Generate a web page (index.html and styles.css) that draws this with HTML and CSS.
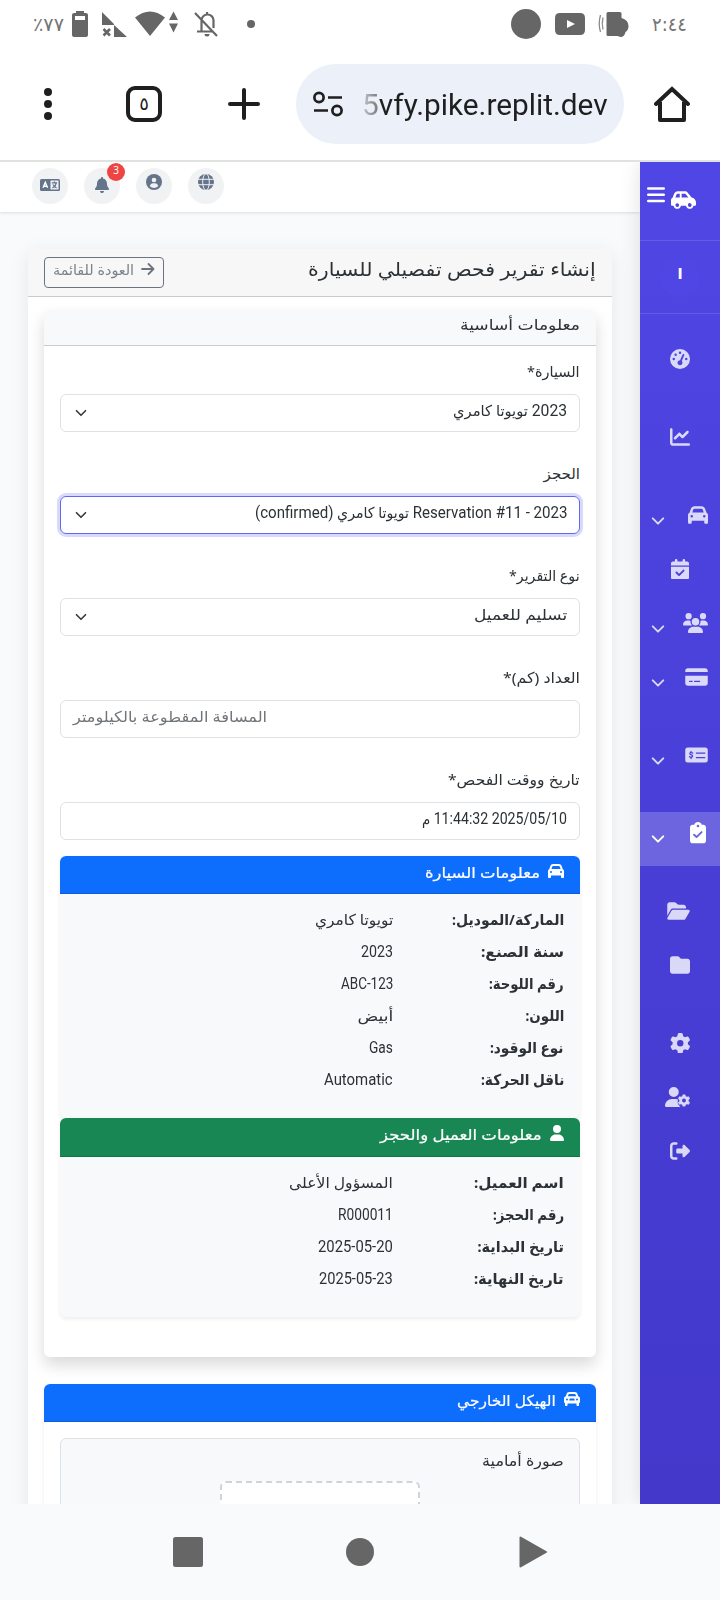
FILE: index.html
```html
<!DOCTYPE html>
<html lang="ar" dir="rtl">
<head>
<meta charset="utf-8">
<title>إنشاء تقرير فحص تفصيلي للسيارة</title>
<link rel="stylesheet" href="styles.css">
</head>
<body>
<svg class="defs" width="0" height="0">
  <symbol id="car" viewBox="0 0 512 512"><path d="M135.2 117.4L109.1 192H402.9l-26.1-74.6C372.3 104.6 360.2 96 346.6 96H165.4c-13.6 0-25.7 8.6-30.2 21.4zM39.6 196.8L74.8 96.3C88.3 57.8 124.6 32 165.4 32H346.6c40.8 0 77.1 25.8 90.6 64.3l35.2 100.5c23.2 9.6 39.6 32.5 39.6 59.2V400v48c0 17.7-14.3 32-32 32H448c-17.7 0-32-14.3-32-32V400H96v48c0 17.7-14.3 32-32 32H32c-17.7 0-32-14.3-32-32V400 256c0-26.7 16.4-49.6 39.6-59.2zM128 288a32 32 0 1 0 -64 0 32 32 0 1 0 64 0zm288 32a32 32 0 1 0 0-64 32 32 0 1 0 0 64z"/></symbol>
  <symbol id="user" viewBox="0 0 448 512"><path d="M224 256A128 128 0 1 0 224 0a128 128 0 1 0 0 256zm-45.7 48C79.8 304 0 383.8 0 482.3C0 498.7 13.3 512 29.7 512H418.3c16.4 0 29.7-13.3 29.7-29.7C448 383.8 368.2 304 269.7 304H178.3z"/></symbol>
  <symbol id="gear" viewBox="0 0 512 512"><path d="M495.9 166.6c3.2 8.7 .5 18.4-6.4 24.6l-43.3 39.4c1.1 8.3 1.7 16.8 1.7 25.4s-.6 17.1-1.7 25.4l43.3 39.4c6.9 6.2 9.6 15.9 6.4 24.6c-4.4 11.9-9.7 23.3-15.8 34.3l-4.7 8.1c-6.6 11-14 21.4-22.1 31.2c-5.9 7.2-15.7 9.6-24.5 6.8l-55.7-17.7c-13.4 10.3-28.2 18.9-44 25.4l-12.5 57.1c-2 9.1-9 16.3-18.2 17.8c-13.8 2.3-28 3.5-42.5 3.5s-28.7-1.2-42.5-3.5c-9.2-1.5-16.2-8.7-18.2-17.8l-12.5-57.1c-15.8-6.5-30.6-15.1-44-25.4L83.1 425.9c-8.8 2.8-18.6 .3-24.5-6.8c-8.1-9.8-15.5-20.2-22.1-31.2l-4.7-8.1c-6.1-11-11.4-22.4-15.8-34.3c-3.2-8.7-.5-18.4 6.4-24.6l43.3-39.4C64.6 273.1 64 264.6 64 256s.6-17.1 1.7-25.4L22.4 191.2c-6.9-6.2-9.6-15.9-6.4-24.6c4.4-11.9 9.7-23.3 15.8-34.3l4.7-8.1c6.6-11 14-21.4 22.1-31.2c5.9-7.2 15.7-9.6 24.5-6.8l55.7 17.7c13.4-10.3 28.2-18.9 44-25.4l12.5-57.1c2-9.1 9-16.3 18.2-17.8C227.3 1.2 241.5 0 256 0s28.7 1.2 42.5 3.5c9.2 1.5 16.2 8.7 18.2 17.8l12.5 57.1c15.8 6.5 30.6 15.1 44 25.4l55.7-17.7c8.8-2.8 18.6-.3 24.5 6.8c8.1 9.8 15.5 20.2 22.1 31.2l4.7 8.1c6.1 11 11.4 22.4 15.8 34.3zM256 336a80 80 0 1 0 0-160 80 80 0 1 0 0 160z"/></symbol>
  <symbol id="down" viewBox="0 0 16 16"><path d="m2 5 6 6 6-6" fill="none" stroke="currentColor" stroke-width="2.2" stroke-linecap="round" stroke-linejoin="round"/></symbol>
</svg>

<svg class="status" width="720" height="48" viewBox="0 0 720 48" direction="ltr">
  <text class="sys" x="33" y="31" textLength="31" lengthAdjust="spacingAndGlyphs">٪٧٧</text>
  <path fill-rule="evenodd" d="M76 11h8v2h2q2 0 2 2v20q0 2-2 2H74q-2 0-2-2V15q0-2 2-2h2zM75 16v4h10v-4z"/>
  <path d="M102 12l12 12v1h-12zM114 25l13 12h-13z"/>
  <path d="M103.500 29l6.500 6.500M110 29l-6.500 6.500" stroke="#666" stroke-width="2.600"/>
  <path d="M135 17.500Q150 5.500 165 17.500L150 36zM169 20l4.500-8.500 4.500 8.500zM169 23.500h9l-4.500 9z"/>
  <path class="line" d="M201.500 31V21a6 6 0 0 1 12-1v8M197 31.500h16M195 13l22 23M207 12v3" stroke="#666" stroke-width="2.200"/>
  <path d="M204.500 34h5a2.500 2.500 0 0 1-5 0z"/>
  <circle cx="251" cy="24" r="4"/>
  <circle cx="526" cy="24" r="15"/>
  <path fill-rule="evenodd" d="M560 13h20q5 0 5 5v12q0 5-5 5h-20q-5 0-5-5V18q0-5 5-5zm7 7v8l8-4z"/>
  <path d="M608 12h12q1.500 0 1.500 1.500V18q7 2 7 8 0 4-3 6-1 5-5 5l-3-1h-9.500q-1.500 0-1.500-1.500v-21q0-1.500 1.500-1.500z"/>
  <path class="line" d="M600.500 15q-2.500 9 0 17M603 17.500q-1.500 6 0 12" stroke="#8a8a8a" stroke-width="1.300"/>
  <text class="sys" x="652" y="31" textLength="35" lengthAdjust="spacingAndGlyphs">٢:٤٤</text>
</svg>

<header class="browser" dir="ltr">
  <svg class="b-dots" width="12" height="36" viewBox="0 0 12 36"><circle cx="6" cy="6" r="4"/><circle cx="6" cy="18" r="4"/><circle cx="6" cy="30" r="4"/></svg>
  <div class="b-tabs">٥</div>
  <svg class="b-plus" width="32" height="32" viewBox="0 0 32 32"><path d="M16 2v28M2 16h28" stroke="#1f1f1f" stroke-width="4" stroke-linecap="round"/></svg>
  <div class="b-url">
    <svg class="line" width="30" height="26" viewBox="0 0 30 26" stroke="#1f1f1f" stroke-width="2.700"><circle cx="6" cy="6.500" r="4.600"/><path d="M15 6.500h14M1 19.500h14"/><circle cx="24" cy="19.500" r="4.600"/></svg>
    <span data-w="246"><i>5</i>vfy.pike.replit.dev</span>
  </div>
  <svg class="b-home line" width="36" height="36" viewBox="0 0 36 36" stroke="#1f1f1f" stroke-width="4" stroke-linejoin="round"><path d="M2 18 18 3l16 15" stroke-linecap="round" stroke-linejoin="miter"/><path d="M6 16v18h24V16"/></svg>
</header>

<div class="page">
  <nav class="sidebar">
    <div class="brand">
      <svg class="brand-car" width="25" height="20" viewBox="0 0 640 512"><path d="M171.300 96H224v96H111.300l30.400-75.900C146.500 104 158.200 96 171.300 96zM272 192V96h81.200c9.700 0 18.900 4.400 25 12l67.200 84H272zm256.200 1L428.200 68c-18.200-22.800-45.800-36-75-36H171.300c-39.300 0-74.600 23.900-89.100 60.300L40.600 196.400C16.800 205.800 0 228.900 0 256V368c0 17.700 14.300 32 32 32H65.300c7.600 45.400 47.100 80 94.700 80s87.100-34.600 94.700-80H385.300c7.600 45.400 47.100 80 94.700 80s87.100-34.600 94.700-80H608c17.700 0 32-14.300 32-32V320c0-65.200-48.800-119-111.800-127zM434.700 368a48 48 0 1 1 90.500 32 48 48 0 1 1 -90.500-32zM160 336a48 48 0 1 1 0 96 48 48 0 1 1 0-96z"/></svg>
      <svg width="18" height="16" viewBox="0 0 18 16"><path d="M1.200 1.500h15.600M1.200 7.800h15.600M1.200 14h15.600" stroke="#fff" stroke-width="2.400" stroke-linecap="round"/></svg>
    </div>
    <div class="avatar-row"><div class="avatar">ا</div></div>
    <div class="menu">
      <a class="item"><span class="ico"><svg width="20" height="20" viewBox="0 0 512 512"><path d="M0 256a256 256 0 1 1 512 0A256 256 0 1 1 0 256zM288 96a32 32 0 1 0 -64 0 32 32 0 1 0 64 0zM256 416c35.300 0 64-28.700 64-64c0-17.400-6.900-33.100-18.100-44.600L366 161.700c5.300-12.100-.2-26.300-12.300-31.600s-26.300 .2-31.600 12.300L257.900 288c-.6 0-1.300 0-1.900 0c-35.300 0-64 28.700-64 64s28.700 64 64 64zM176 144a32 32 0 1 0 -64 0 32 32 0 1 0 64 0zM96 288a32 32 0 1 0 0-64 32 32 0 1 0 0 64zm352-32a32 32 0 1 0 -64 0 32 32 0 1 0 64 0z"/></svg></span></a>
      <a class="item gap"><span class="ico"><svg width="20" height="20" viewBox="0 0 512 512"><path d="M64 64c0-17.700-14.300-32-32-32S0 46.300 0 64V400c0 44.200 35.800 80 80 80H480c17.700 0 32-14.300 32-32s-14.300-32-32-32H80c-8.800 0-16-7.200-16-16V64zm406.600 86.600c12.500-12.500 12.500-32.800 0-45.300s-32.800-12.500-45.300 0L320 210.700l-57.400-57.400c-12.500-12.500-32.800-12.500-45.300 0l-112 112c-12.500 12.500-12.500 32.800 0 45.300s32.800 12.500 45.300 0L240 221.300l57.400 57.400c12.500 12.500 32.800 12.500 45.300 0l128-128z"/></svg></span></a>
      <a class="item drop gap"><span class="ico"><svg width="20" height="20"><use href="#car"/></svg></span><svg class="chev" width="14" height="14"><use href="#down"/></svg></a>
      <a class="item"><span class="ico"><svg width="18" height="20.600" viewBox="0 0 448 512"><path d="M128 0c17.700 0 32 14.300 32 32V64H288V32c0-17.700 14.300-32 32-32s32 14.300 32 32V64h48c26.500 0 48 21.500 48 48v48H0V112C0 85.500 21.500 64 48 64H96V32c0-17.700 14.300-32 32-32zM0 192H448V464c0 26.500-21.500 48-48 48H48c-26.500 0-48-21.500-48-48V192zM329 305c9.400-9.400 9.400-24.600 0-33.900s-24.600-9.400-33.900 0l-95 95-47-47c-9.400-9.400-24.600-9.400-33.900 0s-9.400 24.600 0 33.900l64 64c9.400 9.400 24.600 9.400 33.900 0L329 305z"/></svg></span></a>
      <a class="item drop"><span class="ico"><svg width="25" height="20" viewBox="0 0 640 512"><path d="M144 0a80 80 0 1 1 0 160A80 80 0 1 1 144 0zM512 0a80 80 0 1 1 0 160A80 80 0 1 1 512 0zM0 298.700C0 239.800 47.800 192 106.700 192h42.700c15.900 0 31 3.500 44.600 9.700c-1.300 7.200-1.900 14.700-1.900 22.300c0 38.200 16.800 72.500 43.300 96c-.2 0-.4 0-.7 0H21.300C9.600 320 0 310.400 0 298.700zM405.300 320c-.2 0-.4 0-.7 0c26.600-23.500 43.300-57.800 43.300-96c0-7.600-.7-15-1.900-22.300c13.600-6.300 28.700-9.700 44.600-9.700h42.700C592.200 192 640 239.800 640 298.700c0 11.800-9.600 21.300-21.300 21.300H405.300zM224 224a96 96 0 1 1 192 0 96 96 0 1 1 -192 0zM128 485.300C128 411.700 187.700 352 261.300 352H378.700C452.300 352 512 411.700 512 485.300c0 14.700-11.900 26.700-26.700 26.700H154.700c-14.700 0-26.700-11.900-26.700-26.700z"/></svg></span><svg class="chev" width="14" height="14"><use href="#down"/></svg></a>
      <a class="item drop"><span class="ico"><svg width="23" height="20" viewBox="0 0 576 512"><path d="M64 32C28.700 32 0 60.700 0 96v32H576V96c0-35.300-28.700-64-64-64H64zM576 224H0V416c0 35.300 28.700 64 64 64H512c35.300 0 64-28.700 64-64V224zM112 352h64c8.800 0 16 7.200 16 16s-7.200 16-16 16H112c-8.800 0-16-7.200-16-16s7.200-16 16-16zm112 16c0-8.800 7.200-16 16-16H368c8.800 0 16 7.200 16 16s-7.200 16-16 16H240c-8.800 0-16-7.200-16-16z"/></svg></span><svg class="chev" width="14" height="14"><use href="#down"/></svg></a>
      <a class="item drop gap"><span class="ico"><svg width="23" height="20" viewBox="0 0 576 512"><path fill-rule="evenodd" d="M64 64H512a64 64 0 0 1 64 64V384a64 64 0 0 1-64 64H64a64 64 0 0 1-64-64V128A64 64 0 0 1 64 64zM272 192v32H512v-32zM272 304v32H512v-32z"/><path class="line" d="M190 206c-14-12-36-16-54-10-24 8-24 38 0 48l34 14c24 12 22 44-4 52-20 6-42 0-58-12M148 164v28M148 316v32" stroke="#4a41da" stroke-width="32" stroke-linecap="round"/></svg></span><svg class="chev" width="14" height="14"><use href="#down"/></svg></a>
      <a class="item drop active gap"><span class="ico"><svg width="16" height="21.300" viewBox="0 0 384 512"><path fill-rule="evenodd" d="M192 0c-41.800 0-77.400 26.700-90.500 64H64C28.700 64 0 92.700 0 128V448c0 35.300 28.700 64 64 64H320c35.300 0 64-28.700 64-64V128c0-35.300-28.700-64-64-64H282.500C269.400 26.700 233.800 0 192 0zm0 64a32 32 0 1 1 0 64 32 32 0 1 1 0-64z"/><path class="line" d="M98 306l60 56 120-120" stroke="#6d65df" stroke-width="46" stroke-linecap="round" stroke-linejoin="round"/></svg></span><svg class="chev" width="14" height="14"><use href="#down"/></svg></a>
      <a class="item gap"><span class="ico"><svg width="23" height="20" viewBox="0 0 576 512"><path d="M88.700 223.800L0 375.800V96C0 60.700 28.700 32 64 32H181.500c17 0 33.300 6.700 45.300 18.700l26.500 26.500c12 12 28.300 18.700 45.300 18.700H416c35.300 0 64 28.700 64 64v32H144c-22.800 0-43.800 12.100-55.300 31.800zm27.600 16.100C122.100 230 132.600 224 144 224H544c11.500 0 22 6.100 27.700 16.100s5.700 22.200-.1 32.100l-112 192C453.900 474 443.400 480 432 480H32c-11.500 0-22-6.100-27.700-16.100s-5.700-22.200 .1-32.100l112-192z"/></svg></span></a>
      <a class="item"><span class="ico"><svg width="20" height="20" viewBox="0 0 512 512"><path d="M64 480H448c35.300 0 64-28.700 64-64V160c0-35.300-28.700-64-64-64H288c-10.100 0-19.600-4.700-25.600-12.800L243.200 57.600C231.100 41.500 212.100 32 192 32H64C28.700 32 0 60.700 0 96V416c0 35.300 28.700 64 64 64z"/></svg></span></a>
      <a class="item gap"><span class="ico"><svg width="20.500" height="20.500"><use href="#gear"/></svg></span></a>
      <a class="item"><span class="ico"><svg width="25" height="20" viewBox="0 0 640 512"><path d="M224 256A128 128 0 1 0 224 0a128 128 0 1 0 0 256zm-45.700 48C79.800 304 0 383.800 0 482.300C0 498.700 13.300 512 29.700 512H404C340 470 305 390 338 318 318 308 294 304 269.700 304z"/><use href="#gear" x="328" y="188" width="316" height="316"/></svg></span></a>
      <a class="item"><span class="ico"><svg width="20" height="20" viewBox="0 0 512 512"><path d="M377.900 105.900L500.700 228.700c7.200 7.200 11.300 17.100 11.300 27.300s-4.100 20.100-11.300 27.300L377.900 406.100c-6.400 6.400-15 9.900-24 9.900c-18.700 0-33.900-15.200-33.900-33.900l0-62.100-128 0c-17.700 0-32-14.300-32-32l0-64c0-17.700 14.300-32 32-32l128 0 0-62.100c0-18.700 15.200-33.900 33.900-33.900c9 0 17.600 3.600 24 9.900zM160 96L96 96c-17.700 0-32 14.300-32 32l0 256c0 17.700 14.300 32 32 32l64 0c17.700 0 32 14.300 32 32s-14.300 32-32 32l-64 0c-53 0-96-43-96-96L0 128C0 75 43 32 96 32l64 0c17.700 0 32 14.300 32 32s-14.300 32-32 32z"/></svg></span></a>
    </div>
  </nav>

  <div class="content">
    <div class="topbar" dir="ltr">
      <a class="round lang"><svg width="20" height="12" viewBox="0 0 20 12"><rect width="20" height="12" rx="1.500"/><rect x="10.500" y="1.500" width="8" height="9" fill="#f1f2f4"/><path class="line" d="M3 8.800 5.300 3.400l2.300 5.400M4 7.300h2.600" stroke="#fff" stroke-width="1.400"/><path class="line" d="M11.800 3.900h5.400M14.500 2.600v1.300M12.400 9q3.400-1.800 3.700-5M12.900 5.600q1 2.200 3.700 3.400" stroke="#64748b" stroke-width="1.200"/></svg></a>
      <a class="round"><svg width="14" height="16" viewBox="0 0 448 512"><path d="M224 0c-17.700 0-32 14.300-32 32V51.200C119 66 64 130.600 64 208v18.800c0 47-17.300 92.400-48.500 127.600l-7.400 8.300c-8.400 9.400-10.400 22.900-5.300 34.400S19.400 416 32 416H416c12.600 0 24-7.400 29.200-18.900s3.100-25-5.300-34.400l-7.400-8.300C401.300 319.200 384 273.900 384 226.800V208c0-77.400-55-142-128-156.800V32c0-17.700-14.300-32-32-32zm45.300 493.300c12-12 18.700-28.300 18.700-45.300H224 160c0 17 6.700 33.300 18.700 45.300s28.300 18.700 45.300 18.700s33.300-6.700 45.300-18.700z"/></svg><b class="badge">3</b></a>
      <a class="round up"><svg width="16" height="16" viewBox="0 0 16 16"><circle cx="8" cy="8" r="8"/><circle cx="8" cy="6" r="2.300" fill="#f1f2f4"/><path d="M3.800 12.200Q4.500 9.300 7 9.300h2q2.500 0 3.200 2.900Q8 15.800 3.800 12.200z" fill="#f1f2f4"/></svg></a>
      <a class="round up"><svg width="16" height="16" viewBox="0 0 16 16"><circle cx="8" cy="8" r="8"/><g class="line" stroke="#f1f2f4"><ellipse cx="8" cy="8" rx="3.300" ry="8.300"/><path d="M0 5.300h16M0 10.700h16"/></g></svg></a>
    </div>

    <main class="card outer">
      <div class="outer-head">
        <h1><span data-w="288">إنشاء تقرير فحص تفصيلي للسيارة</span></h1>
        <a class="back"><svg width="14" height="14" viewBox="0 0 14 14"><path class="line" d="M1 7h11.500M7.500 2l5 5-5 5" stroke="#6c757d" stroke-width="1.800" stroke-linecap="round" stroke-linejoin="round"/></svg><span data-w="81">العودة للقائمة</span></a>
      </div>
      <div class="outer-body">
        <section class="card basic">
          <h2><span data-w="120">معلومات أساسية</span></h2>
          <div class="basic-body">
            <div class="field"><label><span data-w="53">السيارة*</span></label><div class="control"><span data-w="114"><i class="lat">2023</i> تويوتا كامري</span><svg width="12" height="12"><use href="#down"/></svg></div></div>
            <div class="field"><label><span data-w="36">الحجز</span></label><div class="control focus"><span data-w="313"><i class="lat">Reservation #11 - 2023</i> تويوتا كامري <i class="lat">(confirmed)</i></span><svg width="12" height="12"><use href="#down"/></svg></div></div>
            <div class="field"><label><span data-w="71">نوع التقرير*</span></label><div class="control"><span data-w="93">تسليم للعميل</span><svg width="12" height="12"><use href="#down"/></svg></div></div>
            <div class="field"><label><span data-w="77">العداد (كم)*</span></label><div class="control num"><span class="from-left" data-w="194">المسافة المقطوعة بالكيلومتر</span></div></div>
            <div class="field last"><label><span data-w="132">تاريخ ووقت الفحص*</span></label><div class="control"><span data-w="145"><i class="lat">2025/05/10 11:44:32</i> م</span></div></div>

            <section class="info">
              <h3 class="blue"><svg width="16" height="16"><use href="#car"/></svg><span data-w="115">معلومات السيارة</span></h3>
              <dl class="rows six">
                <div><dt><span data-w="112">الماركة/الموديل:</span></dt><dd><span data-w="78">تويوتا كامري</span></dd></div>
                <div><dt><span data-w="83">سنة الصنع:</span></dt><dd><span class="lat" data-w="32">2023</span></dd></div>
                <div><dt><span data-w="75">رقم اللوحة:</span></dt><dd><span class="lat" data-w="52">ABC-123</span></dd></div>
                <div><dt><span data-w="38.5">اللون:</span></dt><dd><span data-w="35.5">أبيض</span></dd></div>
                <div><dt><span data-w="74">نوع الوقود:</span></dt><dd><span class="lat" data-w="24">Gas</span></dd></div>
                <div><dt><span data-w="83">ناقل الحركة:</span></dt><dd><span class="lat" data-w="69">Automatic</span></dd></div>
              </dl>
            </section>
            <section class="info">
              <h3 class="green"><svg width="14" height="16"><use href="#user"/></svg><span data-w="162">معلومات العميل والحجز</span></h3>
              <dl class="rows four">
                <div><dt><span data-w="90">اسم العميل:</span></dt><dd><span data-w="104">المسؤول الأعلى</span></dd></div>
                <div><dt><span data-w="71">رقم الحجز:</span></dt><dd><span class="lat" data-w="55">R000011</span></dd></div>
                <div><dt><span data-w="86.5">تاريخ البداية:</span></dt><dd><span class="lat" data-w="75">2025-05-20</span></dd></div>
                <div><dt><span data-w="90">تاريخ النهاية:</span></dt><dd><span class="lat" data-w="74">2025-05-23</span></dd></div>
              </dl>
            </section>
          </div>
        </section>

        <section class="card exterior">
          <h3 class="blue"><svg width="16" height="16" viewBox="0 0 512 512"><path fill-rule="evenodd" d="M165 32H347c40 0 70 24 82 60l24 76c34 6 59 34 59 70v98c0 26-14 48-32 56v56c0 18-14 32-32 32h-16c-18 0-32-14-32-32v-48H112v48c0 18-14 32-32 32H64c-18 0-32-14-32-32v-56C14 384 0 362 0 336v-98c0-36 25-64 59-70L83 92c12-36 42-60 82-60zm4 64c-14 0-24 8-28 20l-17 52h264l-17-52c-4-12-14-20-28-20zM96 240a32 32 0 1 0 0 64 32 32 0 1 0 0-64zm320 0a32 32 0 1 0 0 64 32 32 0 1 0 0-64zM184 240h144l20 64H164z"/></svg><span data-w="99">الهيكل الخارجي</span></h3>
          <div class="photo">
            <p><span data-w="82">صورة أمامية</span></p>
            <div class="drop-zone"></div>
          </div>
        </section>
      </div>
    </main>
  </div>
</div>

<footer class="android" dir="ltr">
  <svg width="30" height="30" viewBox="0 0 30 30"><rect width="30" height="30" rx="2.500"/></svg>
  <svg width="28" height="28" viewBox="0 0 28 28"><circle cx="14" cy="14" r="14"/></svg>
  <svg width="28" height="32" viewBox="0 0 28 32"><path d="M1.500 1.500v29L27 16z" stroke="#666" stroke-width="2" stroke-linejoin="round"/></svg>
</footer>
<script src="fit.js"></script>
</body>
</html>
```
FILE: styles.css
```css
* { box-sizing: border-box; }
body {
  margin: 0;
  width: 720px;
  height: 1600px;
  overflow: hidden;
  background: #fff;
  color: #2c3136;
  font-family: "Noto Sans", "DejaVu Sans", sans-serif;
  font-size: 15px;
}
svg { display: block; flex: none; fill: currentColor; }
.line { fill: none; }
.defs { position: absolute; }
h1, h2, h3, p, dl, dt, dd { margin: 0; font-weight: 400; }
[data-w] { display: inline-block; white-space: nowrap; transform-origin: right center; }
.lat { font-family: Roboto, "Noto Sans", sans-serif; font-size: 16px; font-style: normal; }

/* System bars */
.status { fill: #666; direction: ltr; }
.sys { font: 19px "DejaVu Sans", sans-serif; fill: #747474; }
.browser {
  height: 114px;
  display: flex;
  align-items: center;
  padding: 0 30px 0 42px;
  border-bottom: 2px solid #e0e2e0;
  color: #1f1f1f;
}
.b-tabs {
  width: 36px; height: 36px;
  margin-left: 72px;
  border: 4px solid #1f1f1f;
  border-radius: 9px;
  text-align: center;
  font: 18px/28px "DejaVu Sans", sans-serif;
}
.b-plus { margin-left: 66px; }
.b-url {
  width: 328px; height: 80px;
  margin-left: 36px;
  padding-left: 17px;
  border-radius: 40px;
  background: #ebf0f9;
  display: flex;
  align-items: center;
  gap: 19px;
  font: 30px/40px Roboto, sans-serif;
}
.b-url span { transform-origin: left center; margin-top: 2px; }
.b-url i {
  font-style: normal;
  color: transparent;
  background: linear-gradient(90deg, #c4c8ce, #777);
  -webkit-background-clip: text;
  background-clip: text;
}
.b-home { margin-left: 30px; }
.android {
  height: 96px;
  padding: 0 172px 0 173px;
  display: flex;
  align-items: center;
  gap: 145px;
  background: #f9fafc;
  color: #666;
}
.android svg:nth-child(2) { margin-left: -2px; }

/* Page frame */
.page { display: flex; height: 1342px; overflow: hidden; background: #f9fafc; }
.content { flex: 1; min-width: 0; }

/* Sidebar */
.sidebar {
  width: 80px;
  flex: none;
  background: linear-gradient(180deg, #4f46e5, #4338ca);
  box-shadow: 0 0 20px rgba(0, 0, 0, .12);
  position: relative;
  z-index: 2;
  color: #fff;
}
.brand {
  height: 79px;
  padding: 25px 24px 0 0;
  display: flex;
  gap: 6px;
  border-bottom: 1px solid rgba(255, 255, 255, .12);
}
.brand-car { margin-top: 3px; }
.avatar-row {
  height: 73px;
  padding-top: 16px;
  border-bottom: 1px solid rgba(255, 255, 255, .12);
}
.avatar {
  width: 40px; height: 40px;
  margin: 0 auto;
  border-radius: 50%;
  background: #4f46e5;
  text-align: center;
  font: bold 15px/34px "DejaVu Sans", sans-serif;
}
.menu { padding-top: 24px; }
.item {
  display: flex;
  align-items: center;
  height: 54px;
  padding: 0 30px 12px 0;
  color: rgba(255, 255, 255, .8);
}
.item.drop { padding-right: 12px; }
.item.gap { margin-top: 24px; }
.item.active { background: rgba(255, 255, 255, .2); color: #fff; }
.ico { width: 20px; display: flex; justify-content: safe center; }
.chev { margin: 11px 23px 0 0; }

/* Top bar */
.topbar {
  height: 50px;
  padding: 6px 32px;
  display: flex;
  gap: 16px;
  background: #fff;
  box-shadow: 0 1px 3px rgba(0, 0, 0, .12);
}
.round {
  position: relative;
  width: 36px; height: 36px;
  display: flex;
  align-items: center;
  justify-content: center;
  padding-bottom: 2px;
  border-radius: 50%;
  background: #f1f2f4;
  color: #64748b;
}
.round.up { padding-bottom: 8px; }
.badge {
  position: absolute;
  top: -5px; right: -5px;
  width: 18px; height: 18px;
  border-radius: 50%;
  background: #ef4444;
  color: #fff;
  text-align: center;
  font: 10px/14px "Noto Sans", sans-serif;
}

/* Cards */
.card { border-radius: 6px; background: #fff; }
.outer { margin: 37px 28px 0; height: 1400px; box-shadow: 0 4px 20px rgba(0, 0, 0, .08); }
.outer-head {
  height: 48px;
  padding: 8px 16px;
  display: flex;
  justify-content: space-between;
  border-radius: 6px 6px 0 0;
  border-bottom: 1px solid #c9cbcc;
  background: #f7f7f7;
}
h1 { font-size: 19px; line-height: 24px; }
.back {
  width: 120px; height: 31px;
  padding: 0 8px;
  border: 1px solid #6c757d;
  border-radius: 4px;
  display: flex;
  gap: 7px;
  color: #7a828a;
  font-size: 14px;
  line-height: 24px;
}
.back svg { margin-top: 4px; }
.outer-body { padding: 13px 16px; }
.basic { height: 1047px; box-shadow: 0 8px 16px rgba(0, 0, 0, .15); }
h2 {
  height: 36px;
  padding: 0 16px;
  border-radius: 6px 6px 0 0;
  border-bottom: 1px solid #c9cbcc;
  background: #f8f9fb;
  font-size: 15px;
  line-height: 28px;
}
.basic-body { padding: 13px 16px 0; }
.field { height: 102px; }
.field.last { height: 89px; }
.field label { display: block; height: 35px; line-height: 24px; }
.control {
  height: 38px;
  padding: 0 12px 0 14px;
  border: 1px solid #dee2e6;
  border-radius: 6px;
  display: flex;
  justify-content: space-between;
  line-height: 30px;
}
.control svg { margin-top: 12px; color: #343a40; }
.control.focus { border-color: #6366f1; box-shadow: 0 0 0 3px #d9d9fb; }
.control.num { padding-left: 12px; justify-content: flex-end; color: #70757a; }
.from-left { transform-origin: left center; }

.info { border-radius: 6px; background: #f8f9fb; box-shadow: 0 2px 4px rgba(0, 0, 0, .075); }
h3 {
  height: 38px;
  padding: 0 16px;
  display: flex;
  gap: 8px;
  border-radius: 6px 6px 0 0;
  color: #fff;
  font-size: 15px;
  line-height: 32px;
}
h3 span { -webkit-text-stroke: .2px #fff; }
h3 svg { margin-top: 7px; }
.blue { background: #0d6efd; border-bottom: 1px solid #0b5ed7; }
.green { height: 39px; background: #198754; border-bottom: 1px solid #157347; }
.rows.six { padding: 9px 16px 23px; }
.rows.four { padding: 9px 16px 23px; }
.rows div { display: flex; height: 32px; line-height: 32px; }
dt { width: 171px; font-weight: 700; }

.exterior { margin-top: 27px; height: 300px; box-shadow: 0 2px 4px rgba(0, 0, 0, .075); }
.photo {
  margin: 16px 16px 0;
  height: 240px;
  padding: 9px 15px;
  border: 1px solid #dee2e6;
  border-radius: 6px;
  background: #f8f9fb;
}
.photo p { line-height: 24px; }
.drop-zone {
  width: 200px; height: 150px;
  margin: 9px auto 0;
  border: 2px dashed #ced4da;
  border-radius: 6px;
  background: #fff;
}
```
FILE: fit.js
```js
// Scales each label horizontally to the width declared in data-w.
document.querySelectorAll('[data-w]').forEach(function (el) {
  el.style.transform = 'scaleX(' + (parseFloat(el.dataset.w) / el.offsetWidth) + ')';
});
```
